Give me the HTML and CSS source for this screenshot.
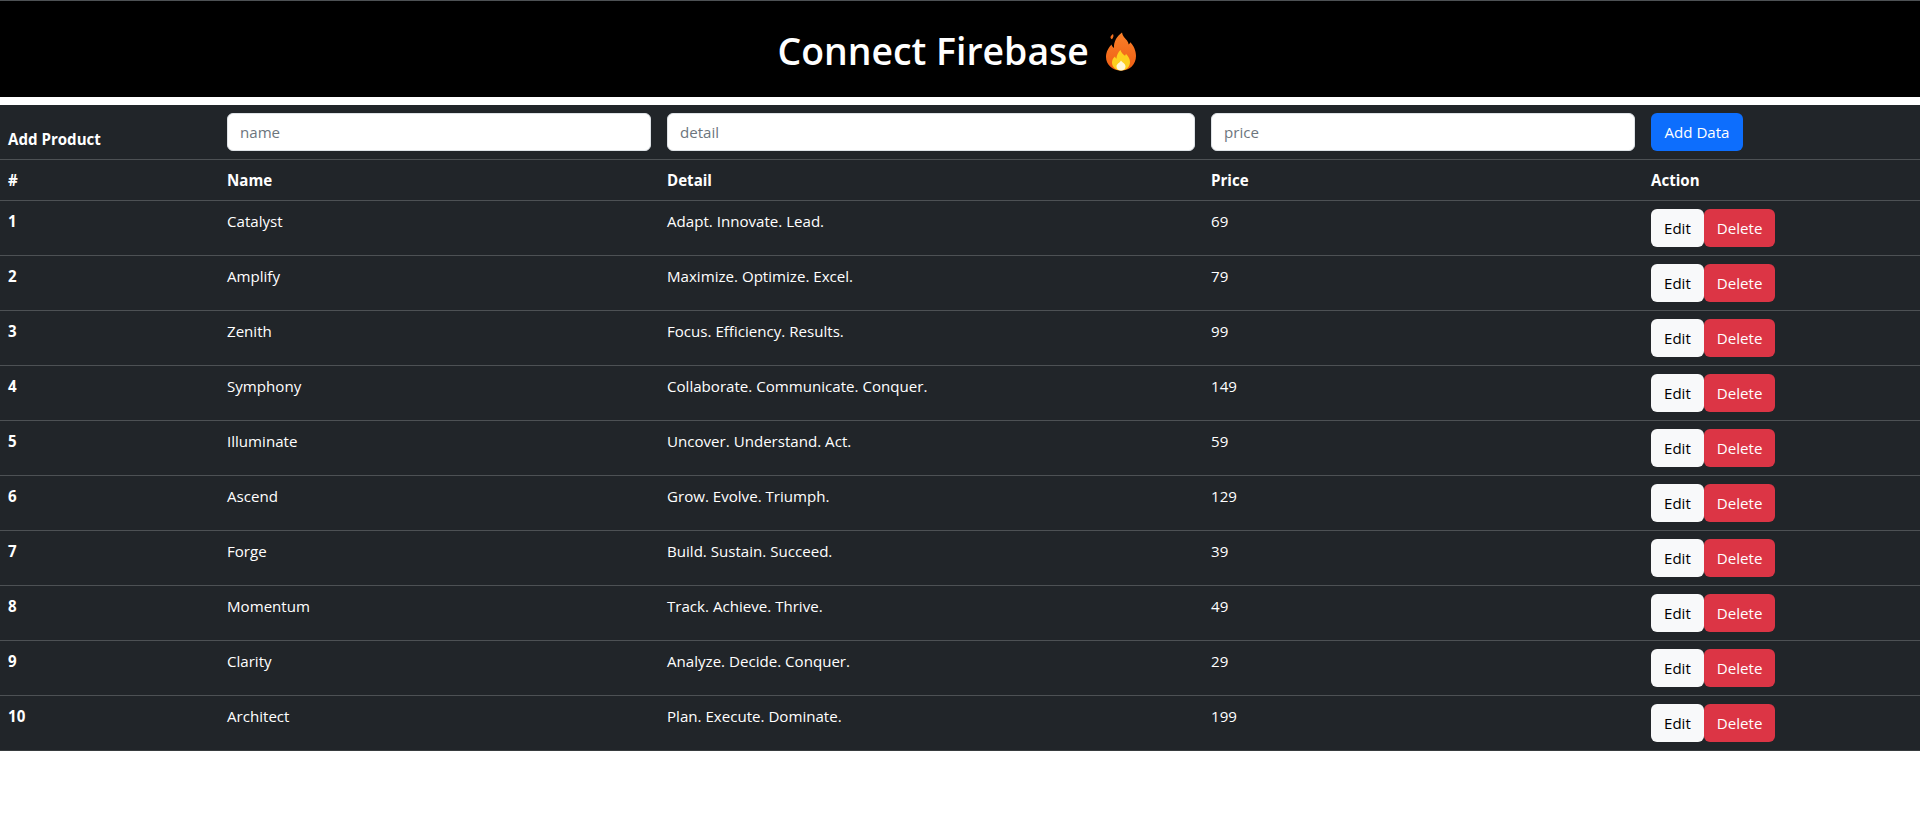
FILE: index.html
```html
<!DOCTYPE html>
<html lang="en">
<head>
  <meta charset="UTF-8" />
  <meta name="viewport" content="width=device-width, initial-scale=1.0" />
  <title>Connect Firebase</title>
  <link rel="stylesheet" href="styles.css">
</head>
<body>
  <header class="page-header">
    <h1>Connect Firebase <svg class="flame" viewBox="0 0 30 38" aria-hidden="true">
      <defs>
        <linearGradient id="flameOuter" x1="0" y1="0" x2="0" y2="1">
          <stop offset="0" stop-color="#f9802a"/>
          <stop offset="1" stop-color="#ef5d12"/>
        </linearGradient>
      </defs>
      <path fill="#f4701f" d="M7 1.500c.8 1.600.6 3.200-1 5.200-1.200-.6-2-1.800-1.200-3C5.400 2.800 6.200 2.200 7 1.500z"/>
      <path fill="url(#flameOuter)" d="M16 0c.5 3.500 3 5.500 5 8 1 1.300 1.500 2.600 1.700 4 .8-.5 1.300-1.300 1.500-2.300C27.600 13 30 18 30 23.500 30 32 23.800 38 15 38S0 32 0 24.500C0 19 2.600 15.200 5.500 12c.4 1.600 1.200 2.700 2.500 3.400C7.600 9 11 3.500 16 0z"/>
      <path fill="#fdd01e" d="M14.500 17.500c.8 3 2.800 4.300 4.500 5.800.6-.6.800-1.300.9-2 2.500 2.500 4.100 5.300 4.100 8.200 0 5-4 8.500-9 8.500s-9-3.500-9-8c0-2.600 1.200-4.500 3-6 .2 1 .7 1.700 1.400 2.200.2-3.400 1.700-6.400 4.100-8.700z"/>
      <path fill="#fff8d8" d="M15 28c1 1.800 4.500 3 4.500 6 0 2.400-2 4-4.500 4s-4.500-1.600-4.500-4c0-2.800 3.500-3.800 4.500-6z"/>
    </svg></h1>
  </header>

  <table class="product-table">
    <colgroup>
      <col class="col-id">
      <col class="col-name">
      <col class="col-detail">
      <col class="col-price">
      <col class="col-action">
    </colgroup>
    <thead>
      <tr class="add-row">
        <th>Add Product</th>
        <td><input type="text" class="field" placeholder="name"></td>
        <td><input type="text" class="field" placeholder="detail"></td>
        <td><input type="text" class="field" placeholder="price"></td>
        <td><button class="btn btn-primary">Add Data</button></td>
      </tr>
      <tr>
        <th>#</th>
        <th>Name</th>
        <th>Detail</th>
        <th>Price</th>
        <th>Action</th>
      </tr>
    </thead>
    <tbody>
      <tr><th>1</th><td>Catalyst</td><td>Adapt. Innovate. Lead.</td><td>69</td><td><button class="btn btn-light">Edit</button><button class="btn btn-danger">Delete</button></td></tr>
      <tr><th>2</th><td>Amplify</td><td>Maximize. Optimize. Excel.</td><td>79</td><td><button class="btn btn-light">Edit</button><button class="btn btn-danger">Delete</button></td></tr>
      <tr><th>3</th><td>Zenith</td><td>Focus. Efficiency. Results.</td><td>99</td><td><button class="btn btn-light">Edit</button><button class="btn btn-danger">Delete</button></td></tr>
      <tr><th>4</th><td>Symphony</td><td>Collaborate. Communicate. Conquer.</td><td>149</td><td><button class="btn btn-light">Edit</button><button class="btn btn-danger">Delete</button></td></tr>
      <tr><th>5</th><td>Illuminate</td><td>Uncover. Understand. Act.</td><td>59</td><td><button class="btn btn-light">Edit</button><button class="btn btn-danger">Delete</button></td></tr>
      <tr><th>6</th><td>Ascend</td><td>Grow. Evolve. Triumph.</td><td>129</td><td><button class="btn btn-light">Edit</button><button class="btn btn-danger">Delete</button></td></tr>
      <tr><th>7</th><td>Forge</td><td>Build. Sustain. Succeed.</td><td>39</td><td><button class="btn btn-light">Edit</button><button class="btn btn-danger">Delete</button></td></tr>
      <tr><th>8</th><td>Momentum</td><td>Track. Achieve. Thrive.</td><td>49</td><td><button class="btn btn-light">Edit</button><button class="btn btn-danger">Delete</button></td></tr>
      <tr><th>9</th><td>Clarity</td><td>Analyze. Decide. Conquer.</td><td>29</td><td><button class="btn btn-light">Edit</button><button class="btn btn-danger">Delete</button></td></tr>
      <tr><th>10</th><td>Architect</td><td>Plan. Execute. Dominate.</td><td>199</td><td><button class="btn btn-light">Edit</button><button class="btn btn-danger">Delete</button></td></tr>
    </tbody>
  </table>
</body>
</html>
```

FILE: styles.css
```css
* {
  box-sizing: border-box;
}
body {
  margin: 0;
  font-family: "Open Sans", "Noto Sans", sans-serif;
  font-size: 15.1px;
  line-height: 24px;
  color: #fff;
  background: #fff;
}
.page-header {
  background: #000;
  border-top: 1px solid #4d5154;
  padding: 26px 0 22px;
  margin-bottom: 8px;
  text-align: center;
}
.page-header h1 {
  margin: 0;
  font-size: 37.4px;
  font-weight: 600;
  line-height: 48px;
}
.flame {
  width: 30px;
  height: 39px;
  margin-left: 7px;
  margin-right: 7px;
  vertical-align: -6px;
}
.product-table {
  width: 100%;
  table-layout: fixed;
  border-collapse: collapse;
  background: #212529;
}
.col-id { width: 219px; }
.col-name { width: 440px; }
.col-detail { width: 544px; }
.col-price { width: 440px; }
.product-table th, .product-table td {
  padding: 8px;
  text-align: left;
  vertical-align: top;
  border-bottom: 1px solid #4d5154;
}
.product-table tbody tr:last-child th, .product-table tbody tr:last-child td {
  border-bottom-color: #373b3e;
}
.add-row th {
  vertical-align: bottom;
}
.field {
  display: block;
  width: 100%;
  height: 38px;
  padding: 6px 12px;
  font: inherit;
  color: #212529;
  background: #fff;
  border: 1px solid #dee2e6;
  border-radius: 6px;
}
.field::placeholder {
  color: #6c757d;
}
.btn {
  height: 38px;
  padding: 6px 12px;
  font: inherit;
  border: 1px solid transparent;
  border-radius: 6px;
  cursor: pointer;
}
.btn-primary {
  min-width: 92px;
  background: #0d6efd;
  color: #fff;
}
.btn-light {
  background: #f8f9fa;
  color: #000;
}
.btn-danger {
  background: #dc3545;
  color: #fff;
}
```
